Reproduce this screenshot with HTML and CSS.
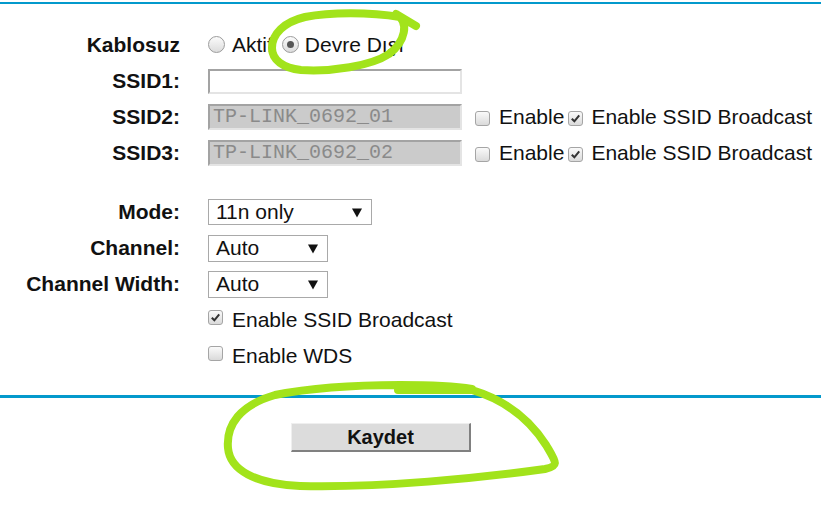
FILE: index.html
```html
<!DOCTYPE html>
<html lang="tr">
<head>
<meta charset="utf-8">
<title>Kablosuz</title>
<link rel="stylesheet" href="styles.css">
</head>
<body>
<div class="topline"></div>
<form class="form">
  <div class="row">
    <div class="label">Kablosuz</div>
    <div class="ctrl">
      <span class="radio"></span><span class="rtext">Aktif</span>
      <span class="radio on"></span><span class="rtext">Devre Dışı</span>
    </div>
  </div>
  <div class="row">
    <div class="label">SSID1:</div>
    <div class="ctrl"><span class="field"></span></div>
  </div>
  <div class="row">
    <div class="label">SSID2:</div>
    <div class="ctrl">
      <span class="field disabled">TP-LINK_0692_01</span>
      <span class="cb first"></span><span class="ctext">Enable</span>
      <span class="cb on inline"><svg viewBox="0 0 14 14"><path d="M3 7.2 L5.8 10 L11 3.6" /></svg></span><span class="ctext tight">Enable SSID Broadcast</span>
    </div>
  </div>
  <div class="row">
    <div class="label">SSID3:</div>
    <div class="ctrl">
      <span class="field disabled">TP-LINK_0692_02</span>
      <span class="cb first"></span><span class="ctext">Enable</span>
      <span class="cb on inline"><svg viewBox="0 0 14 14"><path d="M3 7.2 L5.8 10 L11 3.6" /></svg></span><span class="ctext tight">Enable SSID Broadcast</span>
    </div>
  </div>
  <div class="row spaced">
    <div class="label">Mode:</div>
    <div class="ctrl"><span class="select wide"><span>11n only</span><svg class="arrow" viewBox="0 0 10 10"><path d="M0 1 L10 1 L5 10 Z"/></svg></span></div>
  </div>
  <div class="row">
    <div class="label">Channel:</div>
    <div class="ctrl"><span class="select"><span>Auto</span><svg class="arrow" viewBox="0 0 10 10"><path d="M0 1 L10 1 L5 10 Z"/></svg></span></div>
  </div>
  <div class="row">
    <div class="label">Channel Width:</div>
    <div class="ctrl"><span class="select"><span>Auto</span><svg class="arrow" viewBox="0 0 10 10"><path d="M0 1 L10 1 L5 10 Z"/></svg></span></div>
  </div>
  <div class="row">
    <div class="label"></div>
    <div class="ctrl"><span class="cb on low"><svg viewBox="0 0 14 14"><path d="M3 7.2 L5.8 10 L11 3.6" /></svg></span><span class="ctext">Enable SSID Broadcast</span></div>
  </div>
  <div class="row">
    <div class="label"></div>
    <div class="ctrl"><span class="cb low"></span><span class="ctext">Enable WDS</span></div>
  </div>
</form>
<div class="bottomline"></div>
<div class="actions"><button type="button" class="btn">Kaydet</button></div>

<svg class="scribble" viewBox="0 0 821 513" width="821" height="513">
  <path d="M 416 26 L 396 14 C 410 22, 405 42, 389 54 C 371 66, 331 72, 301 70 C 283 68, 272 60, 272 48 C 272 34, 284 22, 305 17 C 330 12, 370 12, 400 17" />
  <path d="M 398 390 L 472 390 C 505 400, 530 420, 546 445 C 556 462, 560 466, 545 469 C 480 478, 380 488, 300 486 C 255 484, 230 470, 228 448 C 226 425, 240 405, 275 395 C 310 388, 350 385, 400 385 C 440 385, 460 387, 472 389" />
</svg>
</body>
</html>
```

FILE: styles.css
```css
html, body {
  margin: 0;
  padding: 0;
  background: #fff;
}
body {
  width: 821px;
  height: 513px;
  overflow: hidden;
  position: relative;
  font-family: "Liberation Sans", Arial, sans-serif;
  font-size: 21px;
  color: #111;
}
.topline {
  margin-top: 2px;
  height: 2px;
  background: #0399cc;
}
.form {
  margin: 23px 0 0 0;
}
.row {
  display: grid;
  grid-template-columns: 180px 1fr;
  column-gap: 28px;
  height: 36px;
  align-items: center;
}
.row.spaced {
  margin-top: 23px;
}
.label {
  text-align: right;
  font-weight: bold;
  white-space: nowrap;
}
.ctrl {
  display: flex;
  align-items: center;
  white-space: nowrap;
}
.radio {
  width: 15px;
  height: 15px;
  border: 1px solid #9c9c9c;
  border-radius: 50%;
  background: linear-gradient(#fbfbfb, #dcdcdc);
  box-sizing: content-box;
  display: inline-flex;
  align-items: center;
  justify-content: center;
  position: relative;
  top: -1px;
}
.radio.on::after {
  content: "";
  width: 7px;
  height: 7px;
  border-radius: 50%;
  background: #575757;
}
.rtext {
  margin-left: 7px;
  margin-right: 9px;
}
.rtext + .radio.on + .rtext {
  margin-left: 6px;
}
.field {
  display: inline-block;
  box-sizing: border-box;
  width: 254px;
  height: 25px;
  border-style: solid;
  border-width: 2px;
  border-color: #a3a3a3 #e4e4e4 #e4e4e4 #a3a3a3;
  background: #fff;
  font-family: "Liberation Mono", "Courier New", monospace;
  font-size: 20px;
  line-height: 21px;
  padding-left: 3px;
  color: #8a8a8a;
}
.field.disabled {
  height: 26px;
  background: #cbcbcb;
}
.cb {
  width: 13px;
  height: 13px;
  border: 1px solid #a5a5a5;
  border-radius: 3px;
  background: linear-gradient(#fafafa, #dadada);
  display: inline-flex;
  align-items: center;
  justify-content: center;
  margin-left: 6px;
  position: relative;
  top: 1px;
}
.cb.first {
  margin-left: 13px;
}
.cb.inline {
  margin-left: 4px;
}
.cb.low {
  margin-left: 0;
  top: -3px;
}
.cb svg {
  width: 13px;
  height: 13px;
}
.cb svg path {
  fill: none;
  stroke: #333;
  stroke-width: 2.2;
}
.ctext {
  margin-left: 9px;
}
.ctext.tight {
  margin-left: 8px;
}
.select {
  display: inline-flex;
  align-items: center;
  justify-content: space-between;
  box-sizing: border-box;
  width: 120px;
  height: 27px;
  border: 1px solid #a9a9a9;
  background: #fff;
  padding: 0 9px 0 7px;
}
.select.wide {
  width: 164px;
  height: 26px;
}
.select .arrow {
  width: 10px;
  height: 11px;
  fill: #111;
}
.bottomline {
  margin-top: 21px;
  height: 3px;
  background: #0399cc;
}
.actions {
  padding: 25px 0 0 291px;
}
.btn {
  box-sizing: border-box;
  width: 180px;
  height: 29px;
  margin: 0;
  padding: 0;
  background: #dcdcdc;
  border-style: solid;
  border-width: 1px 2px 2px 1px;
  border-color: #efefef #808080 #808080 #efefef;
  font-family: "Liberation Sans", Arial, sans-serif;
  font-weight: bold;
  font-size: 20px;
  color: #111;
}
.scribble {
  position: absolute;
  left: 0;
  top: 0;
  pointer-events: none;
}
.scribble path {
  fill: none;
  stroke: #a2e31b;
  stroke-width: 8;
  stroke-linecap: round;
  stroke-linejoin: round;
}
```
